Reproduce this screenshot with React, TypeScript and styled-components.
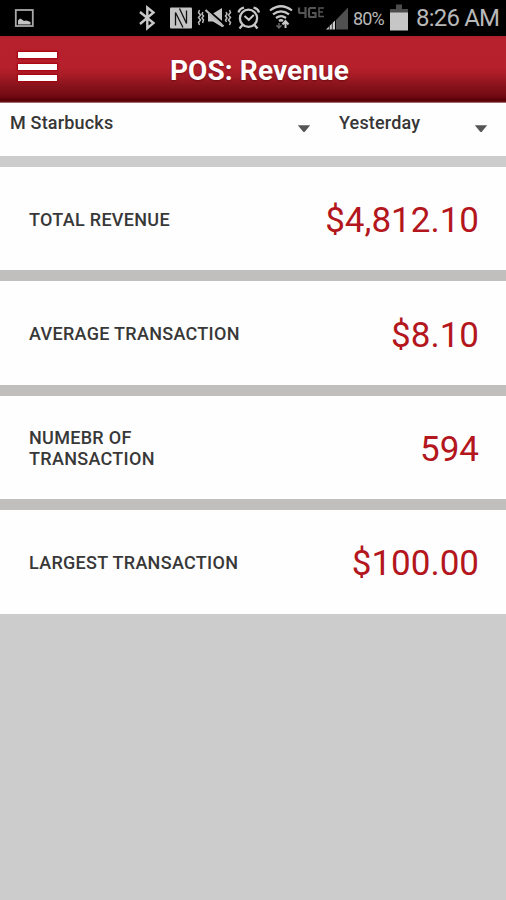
import React from "react";
import styled, { createGlobalStyle } from "styled-components";

const GlobalStyle = createGlobalStyle`
  *, *::before, *::after { box-sizing: border-box; }
  body { margin: 0; background: #cccccc; font-family: Roboto, sans-serif; }
`;

const Screen = styled.main`
  display: flex;
  flex-direction: column;
  width: 506px;
  height: 900px;
  background: #cccccc;
  overflow: hidden;
`;

const StatusBar = styled.div`
  display: flex;
  flex: none;
  height: 36px;
  background: #000;
  color: #b8b8b8;
`;

const StatusIcon = styled.svg<{ $gap?: number }>`
  flex: none;
  display: block;
  height: 36px;
  margin-left: ${(p) => p.$gap ?? 0}px;
`;

const BatteryLevel = styled.span`
  width: 36px;
  margin-left: 4px;
  font-size: 18px;
  line-height: 38px;
  letter-spacing: -0.9px;
  white-space: nowrap;
`;

const Clock = styled.span`
  margin-left: 7px;
  font-size: 24px;
  line-height: 37px;
  letter-spacing: -0.8px;
  white-space: nowrap;
`;

const Header = styled.header`
  display: grid;
  grid-template-columns: 76px 1fr 63px;
  align-items: center;
  flex: none;
  height: 67px;
  background: linear-gradient(#a9202b 0, #b7212d 2px, #b5202c 32px, #a51b26 40px, #8c141d 48px, #720a12 60px, #5a0006 64px, #6a1217 66px, #d9c2c2 67px);
`;

const MenuButton = styled.button`
  display: flex;
  flex-direction: column;
  gap: 5.5px;
  width: 41px;
  margin: 0 0 6px 17px;
  padding: 0;
  border: 0;
  background: none;
`;

const MenuLine = styled.span`
  height: 6px;
  background: #fff;
  box-shadow: 0 0 2px 1px #a8000c;
  margin: 0 1px;
`;

const Title = styled.h1`
  margin: 3px 0 0;
  color: #fff;
  font-size: 28px;
  line-height: 34px;
  font-weight: 700;
  letter-spacing: 0.1px;
  text-align: center;
  text-shadow: 0 1px 2px rgba(70, 0, 0, 0.5);
`;

const Filters = styled.div`
  display: grid;
  grid-template-columns: 329px 177px;
  flex: none;
  height: 53px;
  background: #fefefe;
`;

const Select = styled.button`
  display: flex;
  align-items: flex-start;
  justify-content: space-between;
  padding: 9px 18px 0 10px;
  border: 0;
  background: none;
  color: #363636;
  font: 500 18px/21px Roboto, sans-serif;
  letter-spacing: 0.18px;
  text-align: left;
`;

const Caret = styled.svg`
  width: 14px;
  height: 9px;
  margin-top: 12px;
`;

const Cards = styled.div`
  display: flex;
  flex-direction: column;
  flex: none;
  gap: 11px;
  margin-top: 11px;
  background: #c1bfbe;
`;

const Card = styled.section`
  display: flex;
  align-items: center;
  justify-content: space-between;
  height: 103.4px;
  padding: 2px 27px 0 29px;
  background: #fefefe;
`;

const Label = styled.h2<{ $width?: number }>`
  width: ${(p) => (p.$width ? `${p.$width}px` : "auto")};
  margin: 0;
  color: #383838;
  font-size: 18px;
  line-height: 21.5px;
  font-weight: 500;
  letter-spacing: 0.3px;
`;

const Value = styled.span`
  margin-top: 3px;
  color: #b3161c;
  font-size: 35px;
  line-height: 42px;
  font-weight: 400;
`;

const metrics = [
  { label: "TOTAL REVENUE", value: "$4,812.10" },
  { label: "AVERAGE TRANSACTION", value: "$8.10" },
  { label: "NUMEBR OF TRANSACTION", value: "594", width: 150 },
  { label: "LARGEST TRANSACTION", value: "$100.00" },
];

function StatusIcons() {
  return (
    <>
      <StatusIcon $gap={14} width="21" viewBox="14 0 21 36" fill="none">
        <rect x="15.800" y="10" width="17" height="16" stroke="#a8a8a8" strokeWidth="1.800" />
        <path d="M18 24.500v-4l2-2 2 1 2 1.500 2-.5 2 .5 2.500 1v2.500z" fill="#c4c4c4" />
      </StatusIcon>
      <StatusIcon $gap={103} width="19" viewBox="138 0 19 36" fill="none" stroke="#c8c8c8" strokeWidth="2.400">
        <path d="M140 12l13.500 11-6.200 5.200V7.500l6.200 5L140 24" />
      </StatusIcon>
      <StatusIcon $gap={12} width="24" viewBox="169 0 24 36" fill="none">
        <rect x="170" y="7.500" width="22" height="21" rx="1" fill="#c4c4c4" />
        <path d="M175.500 25.500V12.500l7.500 15M186.500 10.500V23.500L179.500 8.500" stroke="#111" strokeWidth="1.300" />
      </StatusIcon>
      <StatusIcon $gap={4} width="35" viewBox="197 0 35 36" fill="none" stroke="#b8b8b8" strokeWidth="1.500">
        <path d="M199.500 10l-1 2.500 2 2.500-2 2.500 2 2.500-2 2.500 1 2.500M203 12l-1 2 1.500 2-1.500 2 1.500 2-1 3M229.500 10l1 2.500-2 2.500 2 2.500-2 2.500 2 2.500-1 2.500M226 12l1 2-1.500 2 1.500 2-1.500 2 1 2" />
        <path d="M208 13.500h5l9-5.500V27L213 21.500h-5z" fill="#c4c4c4" stroke="none" />
        <path d="M207 9.300l18 15.500" stroke="#000" strokeWidth="2" />
        <path d="M205.500 10L223.500 26.500" strokeWidth="2.200" />
      </StatusIcon>
      <StatusIcon $gap={4} width="26" viewBox="236 0 26 36" fill="none" stroke="#c8c8c8" strokeWidth="2.300">
        <circle cx="248.500" cy="18.300" r="8.600" />
        <path d="M238.500 12.500q1-4 5.500-4.800M259 12.500q-1-4-5.500-4.800M242.500 25l-3 3.500M254.500 25l3 3.500" />
        <path d="M244.500 16l4.300 3.800 5-4.800" strokeWidth="2" />
      </StatusIcon>
      <StatusIcon $gap={7} width="25" viewBox="269 0 25 36" fill="none" stroke="#c8c8c8">
        <path d="M270 10.500q11-8.500 22 0M273 14.300q8-6 16 0M276 18q5-3.700 10 0M279 21q2-1.500 4 0" strokeWidth="2.200" />
        <path d="M279 23v4.500M276.500 25.300l2.500 2.700 2.500-2.700" stroke="#666" strokeWidth="1.500" />
        <path d="M285.500 28v-6M282.500 24.500l3-3.500 3 3.500" strokeWidth="2" />
      </StatusIcon>
      <StatusIcon $gap={3} width="28" viewBox="297 0 28 36" fill="none" stroke="#555" strokeWidth="2.200">
        <path d="M299 7.500v4q0 1.500 1.500 1.500h6M305.500 7v11M316 8h-5.500q-1.500 0-1.500 1.500v6q0 1.500 1.500 1.500h5v-4h-3.500" />
        <path d="M324 8h-5v8.500h5M319 12h4" strokeWidth="1.500" />
      </StatusIcon>
      <StatusIcon $gap={0} width="24" viewBox="325 0 24 36">
        <path d="M336 20L348 7.500V29.500H336z" fill="#505050" />
        <path d="M326 29.500L335 20.500V29.500z" fill="#ccc" />
        <path d="M329.300 24v6M332.300 21v9" stroke="#111" strokeWidth=".8" />
      </StatusIcon>
    </>
  );
}

function DownCaret() {
  return (
    <Caret viewBox="0 0 14 9">
      <path d="M.8 1.300h12.400L7.800 7.700q-.8.800-1.600 0z" fill="#555" />
    </Caret>
  );
}

export default function App() {
  return (
    <>
      <GlobalStyle />
      <Screen>
        <StatusBar>
          <StatusIcons />
          <BatteryLevel>80%</BatteryLevel>
          <StatusIcon $gap={0} width="20" viewBox="389 0 20 36">
            <path d="M396 4.500h6V9h6v4h-18V9h6z" fill="#4c4c4c" />
            <rect x="390" y="12.500" width="18" height="18" fill="#c6c6c6" />
          </StatusIcon>
          <Clock>8:26 AM</Clock>
        </StatusBar>
        <Header>
          <MenuButton aria-label="Menu">
            <MenuLine />
            <MenuLine />
            <MenuLine />
          </MenuButton>
          <Title>POS: Revenue</Title>
        </Header>
        <Filters>
          <Select>
            M Starbucks
            <DownCaret />
          </Select>
          <Select>
            Yesterday
            <DownCaret />
          </Select>
        </Filters>
        <Cards>
          {metrics.map((m) => (
            <Card key={m.label}>
              <Label $width={m.width}>{m.label}</Label>
              <Value>{m.value}</Value>
            </Card>
          ))}
        </Cards>
      </Screen>
    </>
  );
}
